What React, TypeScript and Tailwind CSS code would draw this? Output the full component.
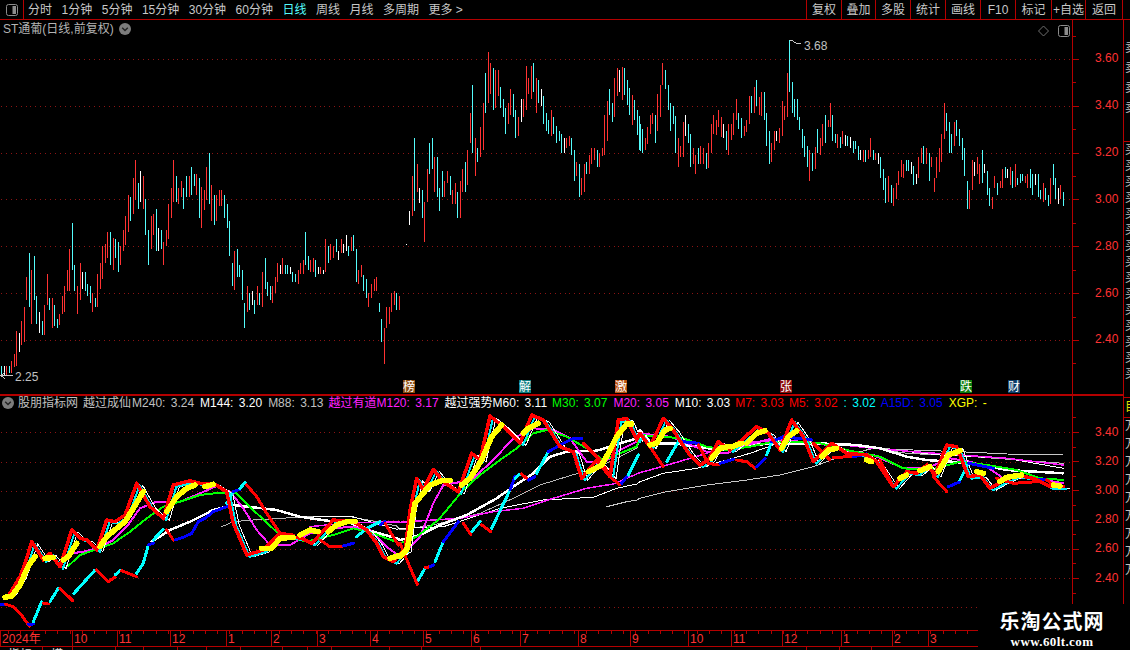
import React from 'react'

type Origin = [number, number]
type Seg = {color: string; width: number; pts: string}

// all chart data was read off at 3x, so every sample keeps its crop origin
const LEFT: Origin = [0, 150]
const MID: Origin = [380, 40]
const RIGHT: Origin = [640, 40]
const LOW_A: Origin = [0, 450]
const LOW_B: Origin = [400, 410]
const LOW_C: Origin = [640, 400]

const CANDLE_COLORS: Record<string, string> = {r: '#ff3232', c: '#54fcfc', w: '#ffffff'}

const candlesLeft = `4,648,675,c 13,648,675,w 19,648,675,r 28,648,670,c 34,633,670,r 43,612,650,r 49,544,648,r 58,549,606,w 64,513,585,r 73,471,576,r 79,381,450,r 88,309,471,c 94,360,522,r 103,318,450,c 109,438,522,c 118,486,549,w 127,513,555,c 133,465,555,r 142,372,465,r 148,444,480,c 157,444,534,r 163,465,528,c 172,507,534,c 178,492,525,r 187,438,492,r 193,408,486,r 202,360,423,r 208,297,423,r 217,219,360,c 223,345,423,c 232,408,492,r 241,339,450,r 247,366,417,w 256,366,423,c 262,402,438,c 271,408,459,c 277,429,486,r 286,444,471,c 292,372,471,r 301,339,417,r 307,288,387,r 316,282,339,r 322,246,324,r 331,246,345,c 340,264,360,r 346,267,324,c 355,276,366,c 361,288,345,r 370,240,303,r 376,198,285,r 385,135,246,r 391,141,213,c 400,84,192,r 406,30,150,r 415,99,177,c 421,63,156,w 430,78,177,r 436,147,255,c 445,240,345,c 454,198,297,r 460,192,255,r 469,177,303,c 475,234,303,w 484,240,297,c 490,276,345,r 499,240,288,r 505,162,267,r 514,114,204,r 520,30,156,r 529,78,156,c 535,114,162,r 544,93,141,r 550,114,177,c 559,78,141,c 568,78,141,r 574,51,135,c 583,72,108,c 589,72,135,r 598,84,204,c 604,111,234,r 613,120,180,r 619,51,150,r 628,9,162,c 634,105,213,r 643,135,225,c 649,135,213,r 658,120,168,r 664,120,168,r 673,135,204,c 682,162,234,c 688,213,318,c 697,339,408,c 703,303,420,r 712,297,381,c 718,345,381,c 727,360,450,c 733,459,534,c 742,408,486,r 748,429,480,c 757,423,465,w 763,450,492,c 772,408,465,r 778,429,465,c 787,366,471,r 796,324,417,c 802,396,438,c 811,408,450,c 817,408,459,r 826,381,429,r 832,339,396,r 841,345,372,w 847,324,372,r 856,345,372,c 862,345,372,c 871,351,372,w 877,366,396,c 886,372,396,c 895,360,402,r 901,339,372,r 910,330,372,r 916,246,345,c 925,318,360,c 931,330,366,r 940,324,366,r 946,330,381,c 955,351,372,w 961,351,372,r 970,360,372,w 976,267,366,r 985,288,339,c 991,282,330,r 1000,288,324,r 1009,267,306,c 1015,303,330,w 1024,267,309,r 1030,282,309,w 1039,255,303,w 1045,288,318,c 1054,261,303,r 1060,255,303,c 1069,297,396,c 1075,360,402,r 1084,345,381,r 1090,375,423,c 1099,387,444,c 1105,429,471,r 1114,402,444,r 1123,387,423,r 1129,381,423,r 1138,459,486,c 1144,507,576,c 1153,534,642,r 1159,471,534,r 1168,471,522,r 1174,429,486,r 1183,423,465,r 1189,429,480,c 1198,438,480,r`

const candlesMid = `79,612,615,w 88,513,555,w 97,408,528,r 103,294,513,c 112,372,456,r 118,444,489,w 127,450,534,c 133,486,606,r 142,387,486,r 148,309,402,c 157,294,387,c 163,351,456,r 172,351,471,c 178,444,513,c 187,393,471,c 193,423,471,r 202,393,429,r 211,408,465,c 217,450,492,r 226,429,492,r 232,456,534,c 241,423,534,r 247,387,456,r 256,366,456,c 262,330,435,r 271,219,309,r 277,135,339,c 286,294,408,r 292,324,366,c 301,261,351,r 310,189,330,r 316,99,219,c 325,36,189,r 331,69,162,r 340,84,210,c 346,90,204,r 355,90,168,r 361,141,204,c 370,177,231,c 376,204,282,c 385,189,252,r 391,147,225,r 400,162,231,c 406,210,294,c 415,231,288,r 424,177,246,w 430,177,231,r 439,78,210,r 445,114,162,r 454,78,177,r 460,69,156,c 469,114,219,r 475,120,189,c 484,147,198,w 490,168,252,c 499,219,273,c 505,240,282,c 514,210,288,r 520,231,282,c 529,258,309,c 538,273,303,c 544,282,339,c 553,294,339,w 559,294,324,r 568,288,318,r 574,294,345,c 583,330,423,c 589,366,408,r 598,372,471,c 604,414,465,r 613,372,456,r 619,366,402,c 628,345,402,r 634,324,372,r 643,324,360,r 652,330,381,c 658,339,381,r 667,324,348,r 673,225,345,r 682,183,303,r 688,147,225,c 697,189,246,c 703,114,231,r 712,84,168,r 718,90,156,w 727,81,180,r 733,84,165,c 742,120,195,c 748,144,225,c 757,165,255,r 763,180,240,c 772,210,285,c 778,228,330,c`

const candlesRight = `1,252,333,c 7,267,339,c 16,294,330,r 22,261,312,r 31,225,282,r 37,219,252,r 46,225,309,c 52,162,273,r 61,135,231,r 67,69,135,r 76,90,147,c 85,135,210,c 91,189,273,c 100,198,252,c 106,228,339,c 115,294,381,r 121,318,351,r 130,246,351,r 136,225,288,w 145,252,309,c 151,282,381,c 160,324,372,r 166,345,402,r 175,324,372,c 181,318,372,r 190,324,372,r 199,339,387,c 205,309,384,r 214,252,339,r 220,225,282,r 229,240,285,r 235,210,261,r 244,231,291,r 250,252,294,w 259,273,330,c 265,252,345,r 274,252,300,r 280,219,285,r 289,177,240,r 295,219,267,c 304,234,294,c 313,258,288,r 319,240,276,r 328,168,252,r 334,168,219,c 343,141,219,r 349,120,198,c 358,171,225,r 364,156,228,r 373,156,240,c 379,219,318,c 388,273,372,c 394,309,366,r 403,273,330,r 409,273,303,w 418,264,309,r 427,183,288,r 433,198,240,r 442,99,231,r 448,0,156,c 457,126,219,c 463,177,231,c 472,177,240,c 478,231,270,c 487,267,324,c 493,288,351,c 502,318,381,c 508,330,423,r 517,339,393,c 526,321,387,r 532,267,339,c 541,294,345,r 547,252,318,r 556,225,309,c 565,240,261,r 571,189,261,r 577,225,303,c 586,282,309,c 592,282,324,r 601,291,324,c 607,273,312,r 616,285,318,w 622,288,318,c 631,291,324,w 640,303,339,c 646,303,327,c 655,318,360,c 661,330,360,w 670,330,366,r 676,330,366,c 685,330,357,r 691,294,351,r 700,330,360,c 706,339,360,r 715,339,372,w 721,351,414,c 730,387,450,c 736,414,489,c 745,408,486,r 754,435,489,c 760,444,498,r 769,429,477,r 775,393,435,r 784,360,411,r 790,372,414,r 799,360,393,c 805,360,393,c 814,366,402,w 820,378,435,c 829,402,432,w 835,351,414,r 844,324,369,r 850,318,372,c 859,324,372,r 868,339,423,c 874,351,381,r 883,414,456,r 889,351,414,r 898,324,396,r 904,282,366,r 913,189,297,r 919,219,273,c 928,246,339,c 934,282,339,c 943,246,318,r 949,240,288,c 958,267,318,c 967,294,360,c 973,324,408,c 982,423,507,c 988,450,507,r 997,360,450,r 1003,366,408,w 1012,351,402,r 1018,372,432,r 1027,330,429,c 1033,372,399,w 1042,393,465,c 1048,444,498,c 1057,471,507,r 1063,408,444,r 1072,429,465,c 1081,423,444,r 1087,387,444,r 1096,381,414,c 1102,387,414,w 1111,381,435,r 1117,393,444,c 1126,372,441,r 1132,414,435,c 1141,402,429,c 1147,402,423,c 1156,408,429,r 1162,402,444,r 1171,387,444,c 1177,402,465,c 1186,402,435,w 1195,402,471,c 1201,450,477,c 1210,429,486,r 1216,444,480,c 1225,465,498,c 1231,414,492,r 1240,372,435,c 1246,414,477,c 1255,444,492,w 1261,435,477,r 1270,456,498,c`

function candlePath(code: string) {
  const sets: [Origin, string][] = [[LEFT, candlesLeft], [MID, candlesMid], [RIGHT, candlesRight]]
  let d = ''
  for (const [[ox, oy], data] of sets) {
    for (const item of data.split(' ')) {
      const [x, top, bottom, c] = item.split(',')
      if (c !== code) continue
      const px = Math.floor(ox + Number(x) / 3) + 0.5
      d += `M${px} ${Math.round(oy + Number(top) / 3)}V${Math.round(oy + Number(bottom) / 3)}`
    }
  }
  return d
}

const toPts = ([ox, oy]: Origin, flat: number[]) => {
  const out: string[] = []
  for (let i = 0; i < flat.length; i += 2) {
    out.push(`${(ox + flat[i] / 3).toFixed(1)},${(oy + flat[i + 1] / 3).toFixed(1)}`)
  }
  return out.join(' ')
}

const join3 = (a: number[], b: number[], c: number[]) =>
  [toPts(LOW_A, a), toPts(LOW_B, b), toPts(LOW_C, c)].filter(Boolean).join(' ')

const upperRed = join3(
  [30, 430, 60, 380, 75, 340, 95, 275, 115, 305, 130, 330, 150, 310, 180, 350, 215, 240, 240, 265, 262, 270, 290, 300, 320, 210, 345, 215, 375, 195, 410, 100, 450, 170, 490, 205, 520, 105, 570, 92, 600, 100, 640, 100, 680, 125, 700, 220, 740, 315, 790, 300, 835, 255, 870, 260, 905, 265, 935, 280, 1000, 210, 1060, 215, 1100, 240, 1130, 280, 1150, 320, 1180, 335, 1210, 300],
  [15, 420, 30, 300, 50, 205, 70, 240, 100, 178, 130, 215, 175, 245, 215, 130, 240, 150, 270, 18, 310, 50, 360, 100, 395, 15, 430, 30, 480, 110, 520, 125, 545, 205, 590, 150, 630, 200, 655, 30, 680, 25, 710, 90],
  [0, 100, 30, 140, 70, 55, 100, 90, 125, 130, 150, 165, 180, 195, 205, 180, 235, 125, 270, 150, 305, 120, 350, 80, 385, 100, 420, 150, 455, 60, 490, 110, 520, 185, 575, 130, 620, 160, 680, 165, 710, 185, 760, 260, 800, 215, 830, 220, 860, 195, 885, 225, 920, 135, 950, 140, 985, 230, 1020, 225, 1050, 265, 1085, 245, 1130, 225, 1180, 235, 1230, 260, 1270, 260],
)

const magenta = join3(
  [215, 310, 250, 305, 290, 295, 340, 270, 380, 230, 420, 175, 470, 155, 540, 155, 600, 130, 650, 108, 690, 125, 730, 175, 770, 240, 810, 285, 870, 285, 930, 250, 1000, 235, 1060, 230, 1110, 240, 1160, 290, 1200, 320],
  [20, 420, 60, 380, 100, 280, 130, 225, 170, 218, 220, 205, 280, 150, 340, 85, 400, 55, 460, 60, 510, 85, 560, 155, 610, 160, 660, 120, 710, 95],
  [0, 100, 40, 105, 90, 110, 130, 125, 200, 155, 260, 160, 320, 135, 400, 115, 470, 125, 540, 130, 620, 155, 700, 165, 790, 205, 860, 205, 930, 175, 990, 185, 1040, 200, 1090, 235, 1180, 235, 1270, 250],
)

const green = join3(
  [205, 348, 240, 315, 290, 298, 340, 280, 390, 245, 440, 205, 490, 170, 540, 155, 600, 135, 660, 128, 710, 130, 770, 190, 840, 255, 920, 275, 1000, 255, 1060, 235, 1120, 250, 1200, 280],
  [0, 400, 50, 380, 115, 330, 190, 240, 240, 195, 300, 150, 350, 115, 400, 70, 440, 60, 500, 80, 560, 115, 610, 150, 660, 130, 710, 110],
  [0, 105, 60, 110, 130, 115, 200, 140, 260, 150, 330, 140, 400, 125, 470, 125, 540, 130, 620, 150, 720, 170, 790, 205, 870, 210, 960, 185, 1040, 195, 1130, 210, 1200, 235, 1270, 240],
)

const whiteThick = join3(
  [455, 275, 510, 240, 570, 215, 640, 180, 700, 165, 760, 172, 830, 180, 900, 200, 980, 212, 1040, 215, 1120, 245, 1190, 265],
  [0, 390, 60, 375, 120, 345, 200, 315, 290, 265, 340, 230, 400, 190, 450, 140, 500, 125, 590, 122, 710, 85],
  [0, 90, 30, 130, 100, 130, 170, 140, 240, 150, 330, 135, 420, 130, 530, 130, 650, 135, 720, 145, 800, 170, 860, 180, 1000, 190, 1100, 210, 1270, 220],
)

const thinLines: {color: string; width: number; pts: string}[] = [
  {
    color: '#b8b8b8',
    width: 1,
    pts: join3(
      [665, 230, 700, 215, 760, 210, 840, 205, 940, 200, 1050, 200, 1130, 215, 1190, 228],
      [0, 360, 100, 345, 180, 325, 240, 310, 340, 265, 420, 225, 500, 200, 600, 170, 710, 115],
      [0, 120, 40, 130, 100, 130, 240, 145, 400, 130, 640, 135, 800, 160, 1000, 170, 1270, 190],
    ),
  },
  {
    color: '#ffffff',
    width: 1,
    pts: join3(
      [940, 198, 1050, 198, 1190, 238],
      [0, 355, 130, 350, 300, 295, 430, 270, 580, 262, 650, 235, 710, 222],
      [0, 245, 70, 220, 170, 205, 260, 180, 330, 160, 400, 135, 520, 130, 640, 135, 760, 150, 900, 165, 1100, 175, 1270, 205],
    ),
  },
  {
    color: '#c8c8c8',
    width: 1,
    pts: join3(
      [],
      [620, 290, 680, 275, 710, 270],
      [0, 295, 80, 275, 200, 255, 320, 240, 420, 225, 520, 200, 600, 170, 700, 145, 820, 150, 960, 155, 1100, 162, 1270, 165],
    ),
  },
  {
    color: '#ff20ff',
    width: 1.5,
    pts: join3(
      [930, 230, 1050, 218, 1190, 216],
      [0, 337, 100, 330, 180, 325, 280, 305, 370, 295, 460, 265, 560, 235, 640, 222, 710, 192],
      [0, 218, 100, 190, 200, 160, 290, 130, 420, 120, 560, 130, 700, 145, 820, 155, 960, 165, 1100, 175, 1270, 195],
    ),
  },
]

const R = '#ff0000'
const C = '#00ffff'
const B = '#0000ff'

const lowerSegs: Seg[] = (
  [
    [LOW_A, B, [0, 462, 15, 462]],
    [LOW_A, R, [15, 462, 40, 470, 60, 490, 75, 510, 88, 528]],
    [LOW_A, B, [84, 522, 100, 522]],
    [LOW_A, C, [100, 515, 125, 455]],
    [LOW_A, R, [130, 460, 145, 462]],
    [LOW_A, C, [150, 455, 175, 415]],
    [LOW_A, R, [180, 415, 218, 452]],
    [LOW_A, C, [222, 430, 285, 360]],
    [LOW_A, R, [290, 360, 325, 395, 345, 382]],
    [LOW_A, C, [345, 375, 360, 362]],
    [LOW_A, R, [365, 362, 410, 380]],
    [LOW_A, C, [410, 370, 430, 340, 445, 285]],
    [LOW_A, B, [445, 285, 460, 280]],
    [LOW_A, C, [460, 270, 490, 238]],
    [LOW_A, R, [500, 240, 520, 270]],
    [LOW_A, B, [525, 270, 550, 262, 575, 250, 595, 215, 615, 205, 640, 185, 680, 170]],
    [LOW_A, C, [680, 160, 700, 125]],
    [LOW_A, B, [700, 125, 720, 118]],
    [LOW_A, C, [720, 115, 735, 98]],
    [LOW_A, R, [740, 105, 770, 140, 800, 190, 840, 250, 880, 255]],
    [LOW_A, R, [960, 270, 990, 290, 1030, 288]],
    [LOW_A, B, [1030, 288, 1060, 280]],
    [LOW_A, C, [1070, 260, 1100, 235, 1140, 215]],
    [LOW_A, B, [1140, 225, 1155, 215]],
    [LOW_A, R, [1155, 220, 1195, 285]],
    [LOW_B, R, [0, 400, 25, 460, 52, 523]],
    [LOW_B, C, [55, 510, 75, 475]],
    [LOW_B, R, [75, 473, 90, 470]],
    [LOW_B, B, [90, 470, 100, 465]],
    [LOW_B, C, [105, 455, 130, 395]],
    [LOW_B, B, [130, 395, 175, 335]],
    [LOW_B, R, [190, 340, 212, 373]],
    [LOW_B, C, [215, 365, 240, 335]],
    [LOW_B, R, [245, 345, 272, 365]],
    [LOW_B, C, [275, 355, 330, 240]],
    [LOW_B, B, [330, 240, 345, 200]],
    [LOW_B, C, [345, 205, 360, 192]],
    [LOW_B, R, [365, 192, 385, 210]],
    [LOW_B, B, [385, 210, 405, 200]],
    [LOW_B, C, [410, 190, 445, 125]],
    [LOW_B, B, [445, 125, 490, 100, 520, 85, 545, 85]],
    [LOW_B, R, [550, 100, 600, 150, 635, 205, 660, 225]],
    [LOW_B, B, [665, 220, 680, 200]],
    [LOW_B, C, [685, 195, 715, 135]],
    [LOW_C, R, [30, 140, 70, 200]],
    [LOW_C, C, [80, 185, 115, 125]],
    [LOW_C, B, [130, 125, 175, 130]],
    [LOW_C, R, [175, 135, 205, 190, 235, 195]],
    [LOW_C, B, [240, 190, 280, 178]],
    [LOW_C, R, [290, 180, 320, 185, 345, 205]],
    [LOW_C, B, [350, 200, 375, 175]],
    [LOW_C, C, [380, 165, 395, 125]],
    [LOW_C, B, [395, 125, 430, 110, 515, 120]],
    [LOW_C, R, [520, 130, 570, 180]],
    [LOW_C, R, [580, 172, 640, 170]],
    [LOW_C, B, [640, 170, 680, 162]],
    [LOW_C, R, [720, 180, 760, 260]],
    [LOW_C, R, [880, 230, 920, 275]],
    [LOW_C, B, [925, 260, 960, 245]],
    [LOW_C, C, [960, 240, 985, 190]],
    [LOW_C, B, [985, 190, 1060, 205]],
    [LOW_C, R, [1070, 235, 1120, 250, 1190, 245]],
    [LOW_C, B, [1190, 238, 1220, 240]],
    [LOW_C, R, [1220, 240, 1245, 258]],
  ] as [Origin, string, number[]][]
).map(([o, color, flat]) => ({color, width: 3, pts: toPts(o, flat)}))

const yellowSegs: string[] = [
  toPts(LOW_A, [15, 442, 35, 438, 60, 405, 75, 370, 90, 340, 105, 320]),
  toPts(LOW_A, [135, 325, 160, 322]),
  toPts(LOW_A, [190, 330, 205, 320, 230, 280]),
  toPts(LOW_A, [300, 290, 320, 260, 350, 235, 375, 215, 400, 175, 430, 125]),
  toPts(LOW_A, [500, 185, 530, 140, 560, 115, 585, 105]),
  toPts(LOW_A, [615, 110, 640, 103]),
  toPts(LOW_A, [785, 295, 815, 295, 840, 265, 880, 262]),
  toPts(LOW_A, [900, 255, 930, 240, 955, 245]),
  toPts(LOW_A, [985, 245, 1010, 225, 1040, 215, 1065, 215]),
  toPts(LOW_A, [1170, 325, 1200, 316]),
  toPts(LOW_B, [0, 440, 20, 420, 25, 400, 45, 280, 65, 255, 90, 225, 125, 212]),
  toPts(LOW_B, [130, 212, 150, 212]),
  toPts(LOW_B, [185, 225, 210, 205, 245, 150, 275, 80, 305, 45]),
  toPts(LOW_B, [370, 70, 385, 55, 415, 40]),
  toPts(LOW_B, [565, 185, 605, 165, 625, 130, 650, 80, 680, 42, 695, 42]),
  toPts(LOW_C, [30, 135, 50, 130, 75, 90, 90, 85]),
  toPts(LOW_C, [215, 175, 240, 145, 265, 140]),
  toPts(LOW_C, [275, 140, 305, 130]),
  toPts(LOW_C, [320, 130, 350, 100, 375, 92]),
  toPts(LOW_C, [425, 145, 445, 110, 470, 92]),
  toPts(LOW_C, [545, 170, 565, 150, 590, 145]),
  toPts(LOW_C, [680, 180, 695, 185]),
  toPts(LOW_C, [780, 235, 800, 225]),
  toPts(LOW_C, [840, 212, 870, 200]),
  toPts(LOW_C, [895, 215, 925, 165, 960, 152]),
  toPts(LOW_C, [1010, 215, 1030, 220]),
  toPts(LOW_C, [1080, 245, 1100, 232, 1145, 225]),
  toPts(LOW_C, [1240, 255, 1260, 258]),
]

const topPrices = ['3.60', '3.40', '3.20', '3.00', '2.80', '2.60', '2.40']
const lowPrices = ['3.40', '3.20', '3.00', '2.80', '2.60', '2.40']
const topGrid = [59, 106, 153, 199, 246, 293, 340]
const lowGrid = [432, 462, 491, 520, 549, 578, 607]

const periods = [
  {label: '分时', cls: 'text-[#c8c8c8]'},
  {label: '1分钟', cls: 'text-[#c8c8c8]'},
  {label: '5分钟', cls: 'text-[#c8c8c8]'},
  {label: '15分钟', cls: 'text-[#c8c8c8]'},
  {label: '30分钟', cls: 'text-[#c8c8c8]'},
  {label: '60分钟', cls: 'text-[#c8c8c8]'},
  {label: '日线', cls: 'text-[#54fcfc]'},
  {label: '周线', cls: 'text-[#c8c8c8]'},
  {label: '月线', cls: 'text-[#c8c8c8]'},
  {label: '多周期', cls: 'text-[#c8c8c8]'},
  {label: '更多 >', cls: 'text-[#c8c8c8]'},
]

const tools = [
  {label: '复权', cls: 'w-[35px]'},
  {label: '叠加', cls: 'w-[34px]'},
  {label: '多股', cls: 'w-[35px]'},
  {label: '统计', cls: 'w-[35px]'},
  {label: '画线', cls: 'w-[35px]'},
  {label: 'F10', cls: 'w-[35px]'},
  {label: '标记', cls: 'w-[36px]'},
  {label: '+自选', cls: 'w-[34px]'},
  {label: '返回', cls: 'w-[37px]'},
]

const legend = [
  {text: '股朋指标网', cls: 'ml-[4px] text-[#c0c0c0]'},
  {text: '越过成仙', cls: 'ml-[5px] text-[#c0c0c0]'},
  {text: 'M240: 3.24', cls: 'ml-[1px] text-[#c0c0c0]'},
  {text: 'M144: 3.20', cls: 'ml-[6px] text-white'},
  {text: 'M88: 3.13', cls: 'ml-[6px] text-[#c0c0c0]'},
  {text: '越过有道', cls: 'ml-[5px] text-[#ff20ff]'},
  {text: 'M120: 3.17', cls: 'text-[#ff20ff]'},
  {text: '越过强势', cls: 'ml-[6px] text-white'},
  {text: 'M60: 3.11', cls: 'text-white'},
  {text: 'M30: 3.07', cls: 'ml-[5px] text-[#00ff00]'},
  {text: 'M20: 3.05', cls: 'ml-[6px] text-[#ff20ff]'},
  {text: 'M10: 3.03', cls: 'ml-[6px] text-white'},
  {text: 'M7: 3.03', cls: 'ml-[5px] text-[#ff0000]'},
  {text: 'M5: 3.02', cls: 'ml-[5px] text-[#ff0000]'},
  {text: ': 3.02', cls: 'ml-[6px] text-[#00ffff]'},
  {text: 'A15D: 3.05', cls: 'ml-[5px] text-[#0000ff]'},
  {text: 'XGP: -', cls: 'ml-[6px] text-[#ffff00]'},
]

const signals = [
  {text: '榜', cls: 'left-[403px] bg-[#8a4a0e]'},
  {text: '解', cls: 'left-[519px] bg-[#0c7c80]'},
  {text: '激', cls: 'left-[615px] bg-[#b8500f]'},
  {text: '张', cls: 'left-[780px] bg-[#8c0c0c]'},
  {text: '跌', cls: 'left-[960px] bg-[#0c7c0c]'},
  {text: '财', cls: 'left-[1008px] bg-[#0c3c68]'},
]

const months = [
  {x: 0, label: '2024年'},
  {x: 72, label: '10'},
  {x: 117, label: '11'},
  {x: 170, label: '12'},
  {x: 226, label: '1'},
  {x: 271, label: '2'},
  {x: 317, label: '3'},
  {x: 370, label: '4'},
  {x: 423, label: '5'},
  {x: 471, label: '6'},
  {x: 520, label: '7'},
  {x: 578, label: '8'},
  {x: 630, label: '9'},
  {x: 688, label: '10'},
  {x: 731, label: '11'},
  {x: 782, label: '12'},
  {x: 841, label: '1'},
  {x: 892, label: '2'},
  {x: 928, label: '3'},
]

const statusCuts = [43, 30, 43, 28, 34, 29, 34, 42, 25, 24, 58, 32, 59, 326, 33, 32]

const PanelIcon = () => (
  <svg width="12" height="12" viewBox="0 0 12 12">
    <rect x="0.5" y="0.5" width="11" height="11" rx="2" fill="none" stroke="#8c8c8c" />
    <rect x="6.5" y="2" width="3.5" height="8" fill="#8c8c8c" />
  </svg>
)

const ChevronDot = () => (
  <svg width="12" height="12" viewBox="0 0 12 12" className="shrink-0">
    <circle cx="6" cy="6" r="6" fill="#7c7c7c" />
    <path d="M3.2 4.8 6 7.6 8.8 4.8" fill="none" stroke="#222" strokeWidth="1.4" />
  </svg>
)

const GridLines = ({ys, viewBox}: {ys: number[]; viewBox: string}) => (
  <svg className="absolute inset-0" width="1072" height="100%" viewBox={viewBox} preserveAspectRatio="xMinYMin">
    {ys.map((y) => (
      <line key={y} x1="1" x2="1072" y1={y + 0.5} y2={y + 0.5} stroke="#8c1414" strokeDasharray="1 3.9" shapeRendering="crispEdges" />
    ))}
  </svg>
)

const AxisTicks = ({step, first, count}: {step: number; first: number; count: number}) => {
  const ticks: React.ReactNode[] = []
  for (let i = -1; i < count; i++) {
    const y = first + step * i
    if (i >= 0) ticks.push(<line key={`m${i}`} x1="0" x2="6" y1={Math.round(y) + 0.5} y2={Math.round(y) + 0.5} stroke="#b40000" />)
    const half = y + step / 2
    ticks.push(<line key={`h${i}`} x1="0" x2="3" y1={Math.round(half) + 0.5} y2={Math.round(half) + 0.5} stroke="#b40000" />)
  }
  return (
    <svg className="absolute inset-0" width="50" height="100%" shapeRendering="crispEdges">
      {ticks}
    </svg>
  )
}

const TopChart = () => (
  <svg className="absolute inset-0" width="1072" height="374" viewBox="0 20 1072 374" shapeRendering="crispEdges">
    {['w', 'r', 'c'].map((code) => (
      <path key={code} d={candlePath(code)} stroke={CANDLE_COLORS[code]} strokeWidth="1" fill="none" />
    ))}
    <path d="M789.5 40V66" stroke="#54fcfc" />
    <path d="M790 40.5h3M793 41.5l3 1.5 5 1" stroke="#c8c8c8" fill="none" />
    <path d="M1 375.5h12M5 372l-4 3.5 4 3.5" stroke="#c8c8c8" fill="none" />
    <path d="M1043.5 26 1048.5 31 1043.5 36 1038.5 31Z" stroke="#707070" fill="none" shapeRendering="auto" />
  </svg>
)

const IndicatorChart = () => (
  <svg className="absolute inset-0" width="1072" height="234" viewBox="0 396 1072 234" shapeRendering="crispEdges">
    <g fill="none" strokeLinejoin="round" strokeLinecap="round">
      {thinLines.map((l, i) => (
        <polyline key={i} points={l.pts} stroke={l.color} strokeWidth={l.width} />
      ))}
      <polyline points={whiteThick} stroke="#ffffff" strokeWidth="2.5" />
      <polyline points={magenta} stroke="#ff20ff" strokeWidth="2" />
      <polyline points={green} stroke="#00ff00" strokeWidth="2" />
      <polyline points={upperRed} stroke="#ffffff" strokeWidth="1" transform="translate(6 2)" />
      <polyline points={upperRed} stroke="#00e8f0" strokeWidth="2" transform="translate(3 2)" />
      {lowerSegs.map((s, i) => (
        <polyline key={i} points={s.pts} stroke={s.color} strokeWidth={s.width} />
      ))}
      <polyline points={upperRed} stroke="#ff0000" strokeWidth="3.5" />
      {yellowSegs.map((pts, i) => (
        <polyline key={i} points={pts} stroke="#ffff00" strokeWidth="5.5" />
      ))}
    </g>
  </svg>
)

const TimeTicks = () => {
  const marks: React.ReactNode[] = []
  for (let x = 8; x < 978; x += 12.3) {
    marks.push(<line key={x} x1={Math.round(x) + 0.5} x2={Math.round(x) + 0.5} y1="0" y2="3" stroke="#b40000" />)
  }
  return (
    <svg className="absolute inset-0" width="978" height="16" shapeRendering="crispEdges">
      {marks}
    </svg>
  )
}

export default function App() {
  return (
    <div className="w-[1130px] h-[650px] bg-black overflow-hidden relative flex flex-col text-[12px] leading-none font-['Liberation_Sans','Noto_Sans_CJK_SC',sans-serif]">
      <div className="h-5 shrink-0 flex items-stretch border-b border-[#b40000]">
        <div className="w-6 flex items-center justify-center border-r border-[#b40000]">
          <PanelIcon />
        </div>
        <div className="flex items-center gap-[9.5px] pl-1">
          {periods.map((p) => (
            <span key={p.label} className={p.cls}>
              {p.label}
            </span>
          ))}
        </div>
        <div className="ml-auto mr-[7px] flex border-l border-[#b40000]">
          {tools.map((t) => (
            <div key={t.label} className={`${t.cls} flex items-center justify-center whitespace-nowrap border-r border-[#b40000] text-[#c8c8c8]`}>
              {t.label}
            </div>
          ))}
        </div>
      </div>

      <div className="flex-1 flex min-h-0">
        <div className="w-[1072px] shrink-0 flex flex-col">
          <div className="h-[374px] shrink-0 relative overflow-hidden">
            <GridLines ys={topGrid} viewBox="0 20 1072 374" />
            <TopChart />
            <div className="relative pl-[3px] pt-[3px] flex items-center gap-[5px] text-[#b4b4b4]">
              <span>ST通葡(日线,前复权)</span>
              <ChevronDot />
            </div>
            <div className="absolute left-[1058px] top-[5px]">
              <PanelIcon />
            </div>
            <span className="absolute left-[804px] top-[20px] text-[#c0c0c0]">3.68</span>
            <span className="absolute left-[15px] top-[351px] text-[#c0c0c0]">2.25</span>
            {signals.map((s) => (
              <span key={s.text} className={`absolute top-[360px] w-[12px] h-[13px] flex items-center justify-center text-white ${s.cls}`}>
                {s.text}
              </span>
            ))}
          </div>
          <div className="h-[2px] shrink-0 bg-[#b40000]" />
          <div className="h-[234px] shrink-0 relative overflow-hidden">
            <GridLines ys={lowGrid} viewBox="0 396 1072 234" />
            <IndicatorChart />
            <div className="relative flex items-center pl-[2px] pt-[1px] whitespace-nowrap [word-spacing:2px]">
              <ChevronDot />
              {legend.map((l) => (
                <span key={l.text} className={l.cls}>
                  {l.text}
                </span>
              ))}
            </div>
          </div>
          <div className="h-[17px] shrink-0 relative flex border-y border-[#b40000]">
            <TimeTicks />
            {months.map((m, i) => (
              <div
                key={m.x}
                className="shrink-0 border-l border-[#b40000] pl-[1px] flex items-center text-[#ff3232]"
                style={{width: (i + 1 < months.length ? months[i + 1].x : 978) - m.x}}
              >
                {m.label}
              </div>
            ))}
          </div>
          <div className="flex-1 flex overflow-hidden">
            {statusCuts.map((w, i) => (
              <div key={i} className="shrink-0 border-r border-[#b40000] pl-2 pt-[2px] text-[#e0e0e0]" style={{width: w}}>
                {i === 0 ? '指标' : i === 1 ? '模板' : ''}
              </div>
            ))}
          </div>
        </div>

        <div className="w-[51px] shrink-0 flex flex-col border-l border-[#b40000]">
          <div className="h-[374px] shrink-0 relative pt-[15px] text-[#ff3232]">
            <AxisTicks step={46.83} first={39} count={7} />
            {topPrices.map((p) => (
              <div key={p} className="h-[46.83px] flex items-center pl-[22px]">
                {p}
              </div>
            ))}
          </div>
          <div className="h-[2px] shrink-0 bg-[#b40000]" />
          <div className="flex-1 relative pt-[21px] text-[#ff3232]">
            <AxisTicks step={29.2} first={36} count={7} />
            {lowPrices.map((p) => (
              <div key={p} className="h-[29.2px] flex items-center pl-[22px]">
                {p}
              </div>
            ))}
          </div>
        </div>

        <div className="w-[7px] shrink-0 overflow-hidden border-l border-[#b40000] whitespace-nowrap text-[#c0c0c0]">
          <div className="h-[122px] pt-[22px] pl-[1px] border-b border-[#b40000]">
            <p className="h-5">卖</p>
            <p className="h-5">卖</p>
            <p className="h-5">卖</p>
            <p className="h-5">卖</p>
          </div>
          <div className="h-[256px] pt-[2px] pl-[1px] border-b border-[#b40000]">
            <p className="h-[16px]">买</p>
            <p className="h-[16px]">买</p>
            <p className="h-[16px]">买</p>
            <p className="h-[16px]">买</p>
            <p className="h-[16px]">买</p>
            <p className="h-[16px]">买</p>
            <p className="h-[16px]">买</p>
            <p className="h-[16px]">买</p>
            <p className="h-[16px]">买</p>
            <p className="h-[16px]">买</p>
            <p className="h-[16px]">买</p>
            <p className="h-[16px]">买</p>
            <p className="h-[16px]">买</p>
            <p className="h-[16px]">买</p>
            <p className="h-[16px]">买</p>
          </div>
          <div className="h-[20px] pt-[3px] pl-[1px] border-b border-[#b40000] text-[#e0e000]">目</div>
          <div className="pt-[2px] pl-[1px]">
            <p className="h-[18px]">万</p>
            <p className="h-[18px]">万</p>
            <p className="h-[18px]">万</p>
            <p className="h-[18px]">万</p>
            <p className="h-[18px]">万</p>
            <p className="h-[18px]">万</p>
            <p className="h-[18px]">万</p>
            <p className="h-[18px]">万</p>
            <p className="h-[18px]">万</p>
          </div>
        </div>
      </div>

      <div className="absolute left-[978px] top-[604px] w-[152px] h-[46px] bg-black flex flex-col items-center pr-[4px] pt-[6px] text-white font-bold font-['Liberation_Serif','Noto_Serif_CJK_SC','Noto_Sans_CJK_SC',serif]">
        <span className="text-[20px] leading-[22px] tracking-[1px] font-['Noto_Sans_CJK_SC',sans-serif]">乐淘公式网</span>
        <span className="text-[13px] leading-[16px] mt-[2px] tracking-[0.4px]">www.60lt.com</span>
      </div>
    </div>
  )
}
